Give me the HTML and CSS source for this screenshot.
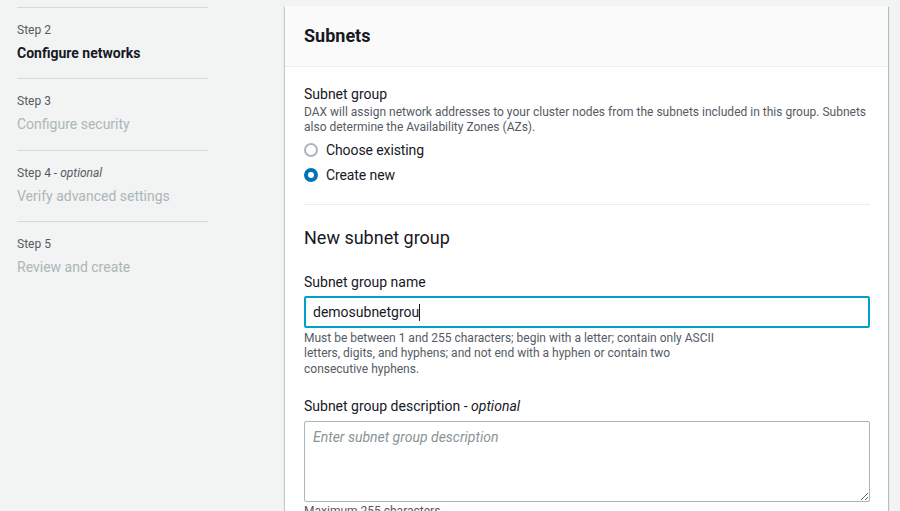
FILE: index.html
```html
<!DOCTYPE html>
<html lang="en">
<head>
<meta charset="utf-8">
<title>Create DAX cluster - Configure networks</title>
<link rel="stylesheet" href="styles.css">
</head>
<body>
<div class="layout">
  <nav class="steps">
    <div class="step">
      <div class="step-num">Step 2</div>
      <div class="step-title current">Configure networks</div>
    </div>
    <div class="step">
      <div class="step-num">Step 3</div>
      <div class="step-title">Configure security</div>
    </div>
    <div class="step">
      <div class="step-num">Step 4 - <i>optional</i></div>
      <div class="step-title">Verify advanced settings</div>
    </div>
    <div class="step">
      <div class="step-num">Step 5</div>
      <div class="step-title">Review and create</div>
    </div>
  </nav>
  <main class="main">
    <section class="card">
      <header class="card-header"><h2>Subnets</h2></header>
      <div class="card-body">
        <div class="field">
          <div class="label">Subnet group</div>
          <div class="desc">DAX will assign network addresses to your cluster nodes from the subnets included in this group. Subnets also determine the Availability Zones (AZs).</div>
          <div class="radios">
            <label class="radio"><span class="dot"></span>Choose existing</label>
            <label class="radio"><span class="dot checked"></span>Create new</label>
          </div>
        </div>
        <hr class="divider">
        <h3 class="sub-heading">New subnet group</h3>
        <div class="field">
          <div class="label">Subnet group name</div>
          <div class="input focused">demosubnetgrou<span class="caret"></span></div>
          <div class="hint">Must be between 1 and 255 characters; begin with a letter; contain only ASCII<br>letters, digits, and hyphens; and not end with a hyphen or contain two<br>consecutive hyphens.</div>
        </div>
        <div class="field desc-field">
          <div class="label">Subnet group description - <i>optional</i></div>
          <textarea class="textarea" placeholder="Enter subnet group description"></textarea>
          <div class="hint">Maximum 255 characters.</div>
        </div>
      </div>
    </section>
  </main>
</div>
</body>
</html>
```
FILE: styles.css
```css
html, body {
  margin: 0;
  padding: 0;
  height: 100%;
  overflow: hidden;
}
body {
  background: #f2f3f3;
  font-family: Roboto, "Liberation Sans", Arial, sans-serif;
  color: #16191f;
}
.layout {
  display: flex;
  align-items: flex-start;
}
.steps {
  width: 191px;
  margin-left: 17px;
  padding-top: 7px;
  flex: none;
}
.step {
  border-top: 1px solid #d5dbdb;
  padding: 14px 0 15.3px;
}
.step-num {
  font-size: 12px;
  line-height: 16px;
  color: #545b64;
  margin-bottom: 5px;
}
.step-title {
  font-size: 14px;
  line-height: 20px;
  color: #aab7b8;
}
.step-title.current {
  color: #16191f;
  font-weight: 700;
}
.main {
  margin-left: 77px;
  margin-top: 6px;
  width: 603px;
  flex: none;
}
.card {
  background: #fff;
  box-shadow: 0 1px 1px 0 rgba(0,28,36,.3), 1px 1px 1px 0 rgba(0,28,36,.2), -1px 1px 1px 0 rgba(0,28,36,.15);
}
.card-header {
  background: #fafafa;
  border-bottom: 1px solid #eaeded;
  padding: 19px 19px 19px;
}
.card-header h2 {
  margin: 0;
  font-size: 18px;
  line-height: 22px;
  font-weight: 700;
}
.card-body {
  padding: 16px 18px 20px 19px;
}
.label {
  font-size: 14px;
  line-height: 22px;
}
.desc {
  font-size: 12px;
  line-height: 15px;
  color: #545b64;
}
.radios {
  margin-top: 2px;
}
.radio {
  display: flex;
  align-items: center;
  height: 25px;
  font-size: 14px;
  letter-spacing: -0.1px;
}
.dot {
  width: 10px;
  height: 10px;
  border: 2px solid #aab7b8;
  border-radius: 50%;
  margin: 0 8px 0 0;
  background: #fff;
}
.dot.checked {
  width: 6px;
  height: 6px;
  border: 4px solid #0073bb;
}
.divider {
  border: 0;
  border-top: 1px solid #eaeded;
  margin: 17px 0 0;
}
.sub-heading {
  margin: 22px 0 22px;
  font-size: 18px;
  line-height: 22px;
  font-weight: 400;
}
.input {
  margin-top: 3px;
  height: 28px;
  border: 2px solid #00a1c9;
  border-radius: 2px;
  padding: 0 7px;
  font-size: 14px;
  line-height: 28px;
  display: flex;
  align-items: center;
}
.caret {
  width: 1px;
  height: 17px;
  background: #16191f;
}
.hint {
  margin-top: 2.5px;
  font-size: 12px;
  line-height: 15.5px;
  color: #545b64;
}
.desc-field {
  margin-top: 17.5px;
}
.textarea {
  display: block;
  box-sizing: border-box;
  margin-top: 4px;
  width: 100%;
  height: 81px;
  border: 1px solid #aab7b8;
  border-radius: 2px;
  padding: 6px 8px;
  font-family: inherit;
  font-size: 14px;
  line-height: 18px;
  resize: vertical;
}
.textarea::placeholder {
  color: #879596;
  font-style: italic;
}
```
